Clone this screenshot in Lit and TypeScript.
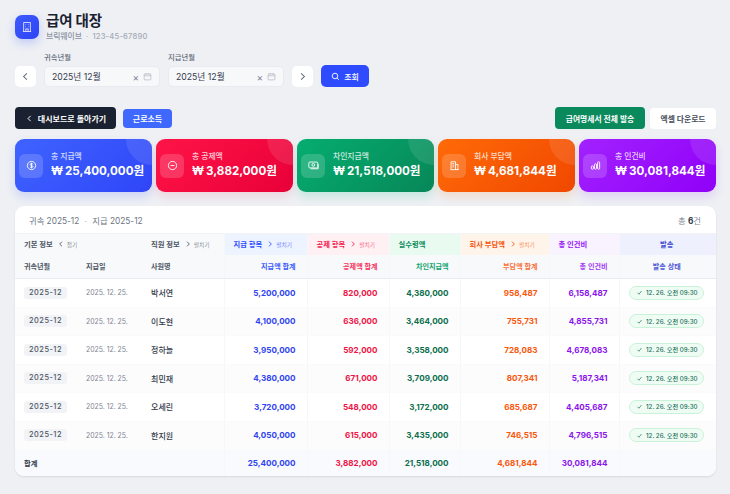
import { LitElement, css, html, svg } from 'lit';
import { customElement } from 'lit/decorators.js';

const cal = html`<svg class="cal" viewBox="0 0 12 12" fill="none" stroke="currentColor" stroke-width=".8"><rect x="1.5" y="2.5" width="9" height="8" rx="1"/><path d="M1.5 5h9M4 1.5v2M8 1.5v2"/></svg>`;
const chevL = svg`<path d="M7.5 2.5 4 6l3.5 3.5"/>`;
const chevR = svg`<path d="M4.5 2.5 8 6l-3.5 3.5"/>`;

type Stat = { cls: string; label: string; value: string; icon: unknown };

const stats: Stat[] = [
  { cls: 'blue', label: '총 지급액', value: '25,400,000원', icon: svg`<circle cx="8" cy="8" r="6"/><path d="M10.2 6.2c-.4-.7-1.200-1-2.200-1-1.100 0-2 .5-2 1.400 0 1.900 4.200 1 4.200 2.900 0 .9-1 1.400-2.200 1.400-1 0-1.800-.4-2.200-1.100M8 3.800v8.400"/>` },
  { cls: 'red', label: '총 공제액', value: '3,882,000원', icon: svg`<circle cx="8" cy="8" r="6"/><path d="M5.200 8h5.600"/>` },
  { cls: 'green', label: '차인지급액', value: '21,518,000원', icon: svg`<rect x="1.200" y="3" width="13" height="8.500" rx="1.500"/><circle cx="7.700" cy="7.200" r="2"/><path d="M4 12.800h10.800V6"/>` },
  { cls: 'orange', label: '회사 부담액', value: '4,681,844원', icon: svg`<path d="M3 14V2.500h6.500V14M9.500 6.500H13V14M2 14h12M5 5h2.500M5 7.500h2.500M5 10h2.500M11.300 9v.01M11.300 11.500v.01"/>` },
  { cls: 'purple', label: '총 인건비', value: '30,081,844원', icon: svg`<rect x="2" y="8.500" width="3" height="5" rx="1.500"/><rect x="6.500" y="5.500" width="3" height="8" rx="1.500"/><rect x="11" y="2.500" width="3" height="11" rx="1.500"/>` },
];

const rows = [
  ['박서연', '5,200,000', '820,000', '4,380,000', '958,487', '6,158,487'],
  ['이도현', '4,100,000', '636,000', '3,464,000', '755,731', '4,855,731'],
  ['정하늘', '3,950,000', '592,000', '3,358,000', '728,083', '4,678,083'],
  ['최민재', '4,380,000', '671,000', '3,709,000', '807,341', '5,187,341'],
  ['오세린', '3,720,000', '548,000', '3,172,000', '685,687', '4,405,687'],
  ['한지원', '4,050,000', '615,000', '3,435,000', '746,515', '4,796,515'],
];

const widths = [62, 65, 82, 83, 82, 71, 89, 70, 97];

@customElement('app-root')
export class AppRoot extends LitElement {
  private dateField() {
    return html`<div class="date"><span>2025년 12월</span><i>×</i>${cal}</div>`;
  }

  private groupHead(label: string, dir: 'l' | 'r' | '', hint = '') {
    return html`<span class="gh">${label}${dir
      ? html`<svg class="tog" viewBox="0 0 12 12" fill="none" stroke="currentColor" stroke-width="1.300">${dir === 'l' ? chevL : chevR}</svg><small>${hint}</small>`
      : ''}</span>`;
  }

  render() {
    return html`
      <header class="head">
        <div class="logo">
          <svg viewBox="0 0 16 16" fill="none" stroke="#fff" stroke-width="1">
            <path d="M3.500 14V2h9v12M2.500 14h11M6 4.800h.8M9.200 4.800h.8M6 7.500h.8M9.200 7.500h.8M6 10.500h4M6.500 10.500V14M9.500 10.500V14"/>
          </svg>
        </div>
        <div>
          <h1>급여 대장</h1>
          <p>브릭웨이브 <em>·</em> <span>123-45-67890</span></p>
        </div>
      </header>

      <div class="filters">
        <button class="sq"><svg viewBox="0 0 12 12" fill="none" stroke="currentColor" stroke-width="1.100">${chevL}</svg></button>
        <label><b>귀속년월</b>${this.dateField()}</label>
        <label><b>지급년월</b>${this.dateField()}</label>
        <button class="sq next"><svg viewBox="0 0 12 12" fill="none" stroke="currentColor" stroke-width="1.100">${chevR}</svg></button>
        <button class="search">
          <svg viewBox="0 0 12 12" fill="none" stroke="#fff" stroke-width="1.200"><circle cx="5.300" cy="5.300" r="3.700"/><path d="m8 8 2.500 2.500"/></svg>조회
        </button>
      </div>

      <div class="actions">
        <button class="back"><svg viewBox="0 0 12 12" fill="none" stroke="#fff" stroke-width="1.300">${chevL}</svg>대시보드로 돌아가기</button>
        <button class="earn">근로소득</button>
        <span class="grow"></span>
        <button class="send">급여명세서 전체 발송</button>
        <button class="excel">엑셀 다운로드</button>
      </div>

      <section class="stats">
        ${stats.map(s => html`
          <div class="stat ${s.cls}">
            <div class="ico"><svg viewBox="0 0 16 16" fill="none" stroke="#fff" stroke-width="1.300">${s.icon}</svg></div>
            <div>
              <div class="lbl">${s.label}</div>
              <div class="val"><span class="won">₩</span>${s.value}</div>
            </div>
          </div>`)}
      </section>

      <section class="card">
        <div class="top">
          <span>귀속 2025-12 <em>·</em> 지급 2025-12</span>
          <span class="cnt">총 <b>6</b>건</span>
        </div>
        <table>
          <colgroup>${widths.map(w => html`<col style="width:${w}px" />`)}</colgroup>
          <thead>
            <tr class="g">
              <th colspan="2" class="l">${this.groupHead('기본 정보', 'l', '접기')}</th>
              <th class="l">${this.groupHead('직원 정보', 'r', '펼치기')}</th>
              <th class="l c-blue sep">${this.groupHead('지급 항목', 'r', '펼치기')}</th>
              <th class="l c-red sep">${this.groupHead('공제 항목', 'r', '펼치기')}</th>
              <th class="l c-green sep">${this.groupHead('실수령액', '')}</th>
              <th class="l c-orange sep">${this.groupHead('회사 부담액', 'r', '펼치기')}</th>
              <th class="l c-purple sep">${this.groupHead('총 인건비', '')}</th>
              <th class="c-indigo sep">발송</th>
            </tr>
            <tr class="h">
              <th class="l">귀속년월</th>
              <th class="l">지급일</th>
              <th class="l">사원명</th>
              <th class="t-blue sep">지급액 합계</th>
              <th class="t-red sep">공제액 합계</th>
              <th class="t-green sep">차인지급액</th>
              <th class="t-orange sep">부담액 합계</th>
              <th class="t-purple sep">총 인건비</th>
              <th class="t-indigo mid sep">발송 상태</th>
            </tr>
          </thead>
          <tbody>
            ${rows.map(r => html`
              <tr>
                <td class="l"><span class="pill">2025-12</span></td>
                <td class="l date-c">2025. 12. 25.</td>
                <td class="l name">${r[0]}</td>
                <td class="num t-blue sep">${r[1]}</td>
                <td class="num t-red sep">${r[2]}</td>
                <td class="num t-dgreen sep">${r[3]}</td>
                <td class="num t-orange sep">${r[4]}</td>
                <td class="num t-purple sep">${r[5]}</td>
                <td class="mid sep">
                  <span class="sent"><svg viewBox="0 0 12 12" fill="none" stroke="currentColor" stroke-width="1.200"><path d="m2.500 6.500 2.500 2.500 4.500-5.500"/></svg>12. 26. 오전 09:30</span>
                </td>
              </tr>`)}
          </tbody>
          <tfoot>
            <tr>
              <td colspan="3" class="l">합계</td>
              <td class="t-blue sep">25,400,000</td>
              <td class="t-red sep">3,882,000</td>
              <td class="t-dgreen sep">21,518,000</td>
              <td class="t-orange sep">4,681,844</td>
              <td class="t-purple sep">30,081,844</td>
              <td class="sep"></td>
            </tr>
          </tfoot>
        </table>
      </section>
    `;
  }

  static styles = css`
    :host {
      display: block;
      box-sizing: border-box;
      width: 730px;
      height: 494px;
      overflow: hidden;
      padding: 12px 14px 0 15px;
      background: #eef0f4;
      color: #1a2130;
      font-family: Inter, 'Noto Sans CJK KR', sans-serif;
    }
    * { box-sizing: border-box; }
    button { font: inherit; border: 0; padding: 0; cursor: pointer; }
    svg { display: block; }

    .head { display: flex; align-items: center; gap: 7px; height: 30px; }
    .logo {
      width: 24px; height: 24px; border-radius: 7px;
      background: linear-gradient(135deg, #3d5bff, #2d43f5);
      box-shadow: 0 4px 10px rgba(61, 91, 255, .25);
      display: flex; align-items: center; justify-content: center;
    }
    .logo svg { width: 12px; height: 12px; }
    h1 { margin: 0; font-size: 14.500px; line-height: 18px; font-weight: 700; letter-spacing: -.2px; }
    .head p { margin: 1px 0 0; font-size: 7.800px; line-height: 11px; color: #8a92a0; font-weight: 500; }
    .head p em { font-style: normal; margin: 0 2px; color: #b8bec8; }
    .head p span { color: #a4aab5; font-size: 7.600px; letter-spacing: .2px; }

    .filters { display: flex; align-items: flex-end; margin-top: 10px; height: 35px; }
    .filters label { display: block; width: 116px; margin-left: 8px; }
    .filters b { display: block; font-size: 7.300px; line-height: 11px; font-weight: 500; color: #5f6877; margin-bottom: 3px; }
    .date {
      height: 21px; border: 1px solid #e9ebf0; border-radius: 5px; background: #f7f8fa;
      display: flex; align-items: center; padding: 0 7px; font-size: 8.700px; color: #333b4a;
    }
    .date span { flex: 1; }
    .date i { font-style: normal; color: #7c8492; font-size: 10px; line-height: 10px; margin-right: 4px; }
    .cal { width: 9px; height: 9px; color: #a5abb6; }
    .sq {
      width: 21px; height: 21px; background: #fff; border-radius: 5px; color: #5d6573;
      display: flex; align-items: center; justify-content: center;
    }
    .sq svg { width: 11px; height: 11px; }
    .next { margin-left: 8px; }
    .search {
      width: 48px; height: 22px; margin-left: 8px; border-radius: 5px; background: #2f4bff; color: #fff;
      display: flex; align-items: center; justify-content: center; gap: 4px; font-size: 8px; font-weight: 500;
    }
    .search svg { width: 9px; height: 9px; }

    .actions { display: flex; align-items: center; gap: 7px; margin-top: 20px; height: 22px; }
    .grow { flex: 1; }
    .back {
      width: 101px; height: 22px; border-radius: 4px; background: #1a2130; color: #fff;
      font-size: 8px; font-weight: 600;
      display: flex; align-items: center; justify-content: center; gap: 4px;
    }
    .back svg { width: 9px; height: 9px; }
    .earn { width: 49px; height: 19px; border-radius: 4px; background: #3f68ff; color: #fff; font-size: 8px; font-weight: 600; }
    .send { width: 90px; height: 22px; border-radius: 4px; background: #0a8a5c; color: #fff; font-size: 7.800px; font-weight: 600; }
    .excel { width: 66px; height: 21px; margin-left: -2px; border-radius: 4px; background: #fff; color: #444c5a; font-size: 7.800px; font-weight: 600; }

    .stats { display: grid; grid-template-columns: repeat(5, 137px); gap: 4px; margin-top: 10px; }
    .stat {
      position: relative; overflow: hidden; height: 53px; border-radius: 9px; color: #fff;
      display: flex; align-items: center; gap: 8px; padding: 0 4px;
    }
    .stat::after {
      content: ''; position: absolute; right: -26px; top: -26px;
      width: 52px; height: 52px; border-radius: 50%; background: rgba(255, 255, 255, .1);
    }
    .blue { background: linear-gradient(135deg, #3f63ff, #2f46f8); box-shadow: 0 5px 10px rgba(61, 91, 255, .18); }
    .red { background: linear-gradient(135deg, #ff1447, #e80038); box-shadow: 0 5px 10px rgba(240, 20, 70, .12); }
    .green { background: linear-gradient(135deg, #05ad70, #078758); box-shadow: 0 5px 10px rgba(0, 190, 110, .18); }
    .orange { background: linear-gradient(135deg, #ff6a08, #f04800); box-shadow: 0 5px 10px rgba(255, 120, 20, .18); }
    .purple { background: linear-gradient(135deg, #a222ff, #9000f8); box-shadow: 0 5px 10px rgba(150, 30, 255, .15); }
    .ico {
      width: 24px; height: 24px; border-radius: 6px; background: rgba(255, 255, 255, .17);
      display: flex; align-items: center; justify-content: center; flex: none;
    }
    .ico svg { width: 11px; height: 11px; }
    .lbl { font-size: 7.800px; line-height: 11px; color: rgba(255, 255, 255, .8); font-weight: 500; }
    .val { font-size: 11.600px; line-height: 17px; font-weight: 700; margin-top: 1px; white-space: nowrap; }
    .won { margin-right: 2px; }

    .card {
      margin-top: 14px; width: 701px; border-radius: 9px; background: #fff; overflow: hidden;
      box-shadow: 0 1px 2px rgba(30, 40, 70, .12);
    }
    .top {
      display: flex; justify-content: space-between; align-items: center;
      height: 27px; padding: 0 15px 0 14px; font-size: 8.300px; color: #6b7482;
    }
    .top em { font-style: normal; margin: 0 3px; color: #a4aab5; }
    .cnt { color: #7c8492; }
    .cnt b { color: #333b4a; font-weight: 700; }

    table { width: 701px; border-collapse: collapse; table-layout: fixed; }
    th, td { padding: 0 11px 0 9px; text-align: right; white-space: nowrap; overflow: hidden; }
    .l { text-align: left; }
    .mid { text-align: center; }
    .sep { border-left: 1px solid #f6f7f9; }

    .g th { height: 21px; background: #f8f9fb; font-size: 7.300px; font-weight: 600; color: #4d5563; border-top: 1px solid #f1f3f6; text-align: left; }
    .g th:last-child { text-align: center; }
    .gh { display: inline-flex; align-items: center; gap: 2px; }
    .gh small { font-size: 5.700px; font-weight: 400; opacity: .65; }
    .tog { width: 8px; height: 8px; margin-left: 2px; }
    .c-blue { background: #edf3ff !important; color: #2f4bff !important; }
    .c-red { background: #fff0f3 !important; color: #f5204f !important; }
    .c-green { background: #e9fbf1 !important; color: #0b8a5c !important; }
    .c-orange { background: #fff4ea !important; color: #f4540a !important; }
    .c-purple { background: #f9f2ff !important; color: #9414f5 !important; }
    .c-indigo { background: #eef0fe !important; color: #3f49cf !important; }

    .h th { height: 24px; background: #f8f9fb; font-size: 7.100px; font-weight: 600; color: #4d5563; border-bottom: 1px solid #e9ebf0; }
    .t-blue { color: #2f44f0; }
    .t-red { color: #f01345; }
    .t-dgreen { color: #0b6e4c; }
    .t-orange { color: #f9560b; }
    .t-purple { color: #8a13ea; }
    .h .t-blue { color: #3d5bff; }
    .h .t-red { color: #f5335e; }
    .h .t-green { color: #12a46e; }
    .h .t-orange { color: #f9703a; }
    .h .t-purple { color: #a23af5; }
    .h .t-indigo { color: #4a55d6; }

    tbody td { height: 28.500px; border-bottom: 1px solid #fafafb; font-size: 8.300px; }
    tbody tr:nth-child(even) td { background: #fcfcfd; }
    tbody .num { font-weight: 700; font-size: 8.100px; }
    .pill {
      display: inline-block; height: 12px; line-height: 12px; padding: 0 5px; border-radius: 3px;
      background: #f1f3f6; color: #4d5563; font-size: 7.400px; font-weight: 500; letter-spacing: .5px;
      vertical-align: middle;
    }
    tbody .date-c { color: #7c8492; font-size: 6.900px; }
    tbody .name { color: #333b4a; font-weight: 500; font-size: 8px; }
    .sent {
      display: inline-flex; align-items: center; gap: 3px; height: 14px; width: 75px; justify-content: center;
      border: 1px solid #c9f3d9; border-radius: 7px; background: #effcf4; color: #23705a;
      font-size: 6.200px; font-weight: 500; vertical-align: middle;
    }
    .sent svg { width: 7px; height: 7px; }

    tfoot td { height: 26.500px; background: #f9fafd; border-top: 1px solid #e9ebf0; font-size: 8.100px; font-weight: 700; }
    tfoot .l { font-size: 7.300px; font-weight: 600; color: #333b4a; }
  `;
}

declare global {
  interface HTMLElementTagNameMap {
    'app-root': AppRoot
  }
}
